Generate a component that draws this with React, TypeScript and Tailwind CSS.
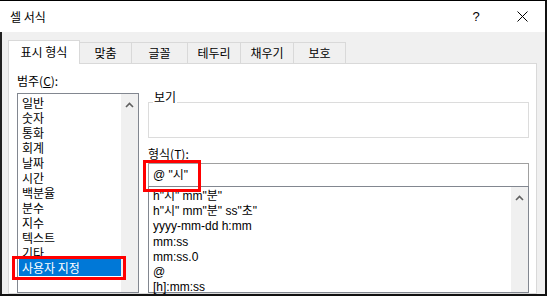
import React from "react";

const categories = [
  "일반",
  "숫자",
  "통화",
  "회계",
  "날짜",
  "시간",
  "백분율",
  "분수",
  "지수",
  "텍스트",
  "기타",
  "사용자 지정",
];

const formats = [
  'h"시" mm"분"',
  'h"시" mm"분" ss"초"',
  "yyyy-mm-dd h:mm",
  "mm:ss",
  "mm:ss.0",
  "@",
  "[h]:mm:ss",
];

const tabs = [
  { label: "맞춤", w: "w-[52px]" },
  { label: "글꼴", w: "w-[56px]" },
  { label: "테두리", w: "w-[53px]" },
  { label: "채우기", w: "w-[53px]" },
  { label: "보호", w: "w-[52px]" },
];

// scrollbar strip with the up arrow only (rest is cut off)
const ScrollBar = () => (
  <div className="w-[17px] shrink-0 bg-[#f0f0f0] flex justify-center pt-[8px]">
    <svg width="9" height="6" viewBox="0 0 9 6">
      <path d="M1 5 L4.5 1.5 L8 5" stroke="#606060" strokeWidth="1.6" fill="none" />
    </svg>
  </div>
);

const App = () => (
  <div className="w-[547px] h-[296px] overflow-hidden flex flex-col bg-white border-t border-t-black border-r-2 border-r-[#111] border-b-2 border-b-[#111] text-[12px] text-black font-['Liberation_Sans','Noto_Sans_CJK_KR',sans-serif]">
    {/* title bar */}
    <div className="h-[31px] shrink-0 flex items-center bg-white">
      <span className="pl-[10px] font-['Noto_Sans_CJK_KR',sans-serif]">셀 서식</span>
      <div className="ml-auto flex h-full">
        <div className="w-[46px] flex items-center justify-center text-[13px]">?</div>
        <div className="w-[46px] flex items-center justify-center">
          <svg width="11" height="11" viewBox="0 0 11 11">
            <path d="M0.5 0.5 L10.5 10.5 M10.5 0.5 L0.5 10.5" stroke="#000" strokeWidth="1" />
          </svg>
        </div>
      </div>
    </div>

    {/* body */}
    <div className="flex-1 min-h-0 bg-[#f0f0f0] border-l-2 border-l-[#222] flex flex-col">
      {/* tabs */}
      <div className="flex items-end ml-[6px] mt-[8px] h-[24px] shrink-0 -mb-px relative z-10">
        <div className="w-[72px] h-[24px] bg-white border-l border-t border-r border-[#d9d9d9] flex items-center justify-center pb-[1px] font-['Noto_Sans_CJK_KR',sans-serif]">
          표시 형식
        </div>
        {tabs.map((t) => (
          <div
            key={t.label}
            className={`${t.w} h-[21px] mb-px border-t border-r border-[#d9d9d9] flex items-center justify-center font-['Noto_Sans_CJK_KR',sans-serif]`}
          >
            {t.label}
          </div>
        ))}
      </div>

      {/* panel */}
      <div className="ml-[6px] w-[529px] flex-1 min-h-0 bg-white border border-[#d9d9d9] flex pl-[8px]">
        {/* category column */}
        <div className="w-[122px] shrink-0 flex flex-col pt-[9px]">
          <div className="h-[15px] leading-[15px] shrink-0 font-['Noto_Sans_CJK_KR',sans-serif]">
            범주(<span className="underline">C</span>):
          </div>
          <div className="mt-[5px] flex-1 min-h-0 border border-[#828790] flex">
            <div className="flex-1 pt-[1px] font-['Noto_Sans_CJK_KR',sans-serif]">
              {categories.map((c, i) =>
                i === categories.length - 1 ? (
                  <div key={c} className="relative ml-[1px] pl-[3px] py-px -my-px leading-[15px] bg-[#0078d7] text-white">
                    {c}
                    <div className="absolute -left-[7px] -right-[5px] -top-[3px] -bottom-[4px] border-[3px] border-[#f00] z-20" />
                  </div>
                ) : (
                  <div key={c} className="ml-[1px] pl-[3px] leading-[15px]">
                    {c}
                  </div>
                )
              )}
            </div>
            <ScrollBar />
          </div>
        </div>

        {/* format column */}
        <div className="ml-[9px] w-[381px] shrink-0 flex flex-col">
          <div className="relative mt-[38px] h-[36px] shrink-0 border border-[#dcdcdc]">
            <span className="absolute left-[4px] -top-[14px] px-[1px] bg-white leading-[15px] font-['Noto_Sans_CJK_KR',sans-serif]">
              보기
            </span>
          </div>
          <div className="mt-[8px] h-[15px] shrink-0 leading-[15px] font-['Noto_Sans_CJK_KR',sans-serif]">
            형식(<span className="underline">T</span>):
          </div>
          <div className="relative mt-[2px] h-[23px] shrink-0 border-t border-x border-[#a0a0a0] flex items-center pl-[4px]">
            @ "시"
            <div className="absolute -left-[6px] -top-[4px] w-[58px] h-[32px] border-[3px] border-[#f00]" />
          </div>
          <div className="flex-1 min-h-0 border border-[#828790] flex">
            <div className="flex-1 pl-[4px] pt-[2px]">
              {formats.map((f) => (
                <div key={f} className="leading-[15.2px] whitespace-pre">
                  {f}
                </div>
              ))}
            </div>
            <ScrollBar />
          </div>
        </div>
      </div>
    </div>
  </div>
);

export default App;
